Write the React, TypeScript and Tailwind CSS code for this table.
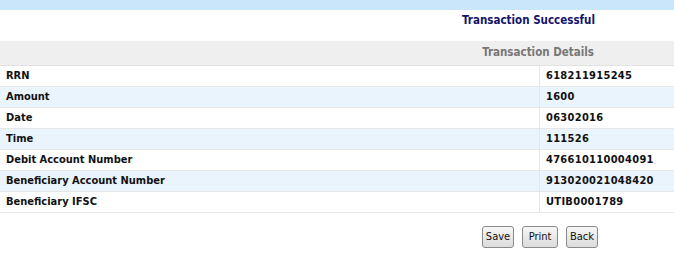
import React from "react";

const rows: [string, string][] = [
  ["RRN", "618211915245"],
  ["Amount", "1600"],
  ["Date", "06302016"],
  ["Time", "111526"],
  ["Debit Account Number", "476610110004091"],
  ["Beneficiary Account Number", "913020021048420"],
  ["Beneficiary IFSC", "UTIB0001789"],
];

export default function App() {
  return (
    <div
      className="w-[674px] h-[261px] bg-white text-[11px] font-bold text-[#111]"
      style={{ fontFamily: "Tahoma, 'DejaVu Sans Condensed', 'DejaVu Sans', sans-serif" }}
    >
      <div className="h-[10px] bg-[#c9e6fa]" />
      <div className="h-[31px] flex items-start justify-end pr-[79px] pt-[2px]">
        <span className="text-[#14146e] text-[11.5px]">Transaction Successful</span>
      </div>
      <div className="h-[25px] bg-[#efefef] flex items-center justify-end pr-[80px] border-b border-[#e2e2e2]">
        <span className="text-[#777] text-[11.5px]">Transaction Details</span>
      </div>
      <div className="flex flex-col">
        {rows.map(([k, v], i) => (
          <div
            key={k}
            className={`flex h-[21px] border-b border-[#e6e6e6] ${i % 2 === 1 ? "bg-[#eaf4fc]" : "bg-white"}`}
          >
            <div className="w-[540px] pl-[6px] flex items-center border-r border-[#e6e6e6]">{k}</div>
            <div className="flex-1 pl-[6px] flex items-center tracking-[0.3px]">{v}</div>
          </div>
        ))}
      </div>
      <div className="flex justify-center gap-[8px] pl-[406px] pt-[13px]">
        {["Save", "Print", "Back"].map((b, i) => (
          <button
            key={b}
            className={`h-[22px] ${i === 1 ? "w-[36px]" : "w-[32px]"} rounded-[3px] border border-[#8a8a8a] bg-gradient-to-b from-[#f6f6f6] to-[#dcdcdc] text-[11px] font-normal text-[#111]`}
          >
            {b}
          </button>
        ))}
      </div>
    </div>
  );
}
